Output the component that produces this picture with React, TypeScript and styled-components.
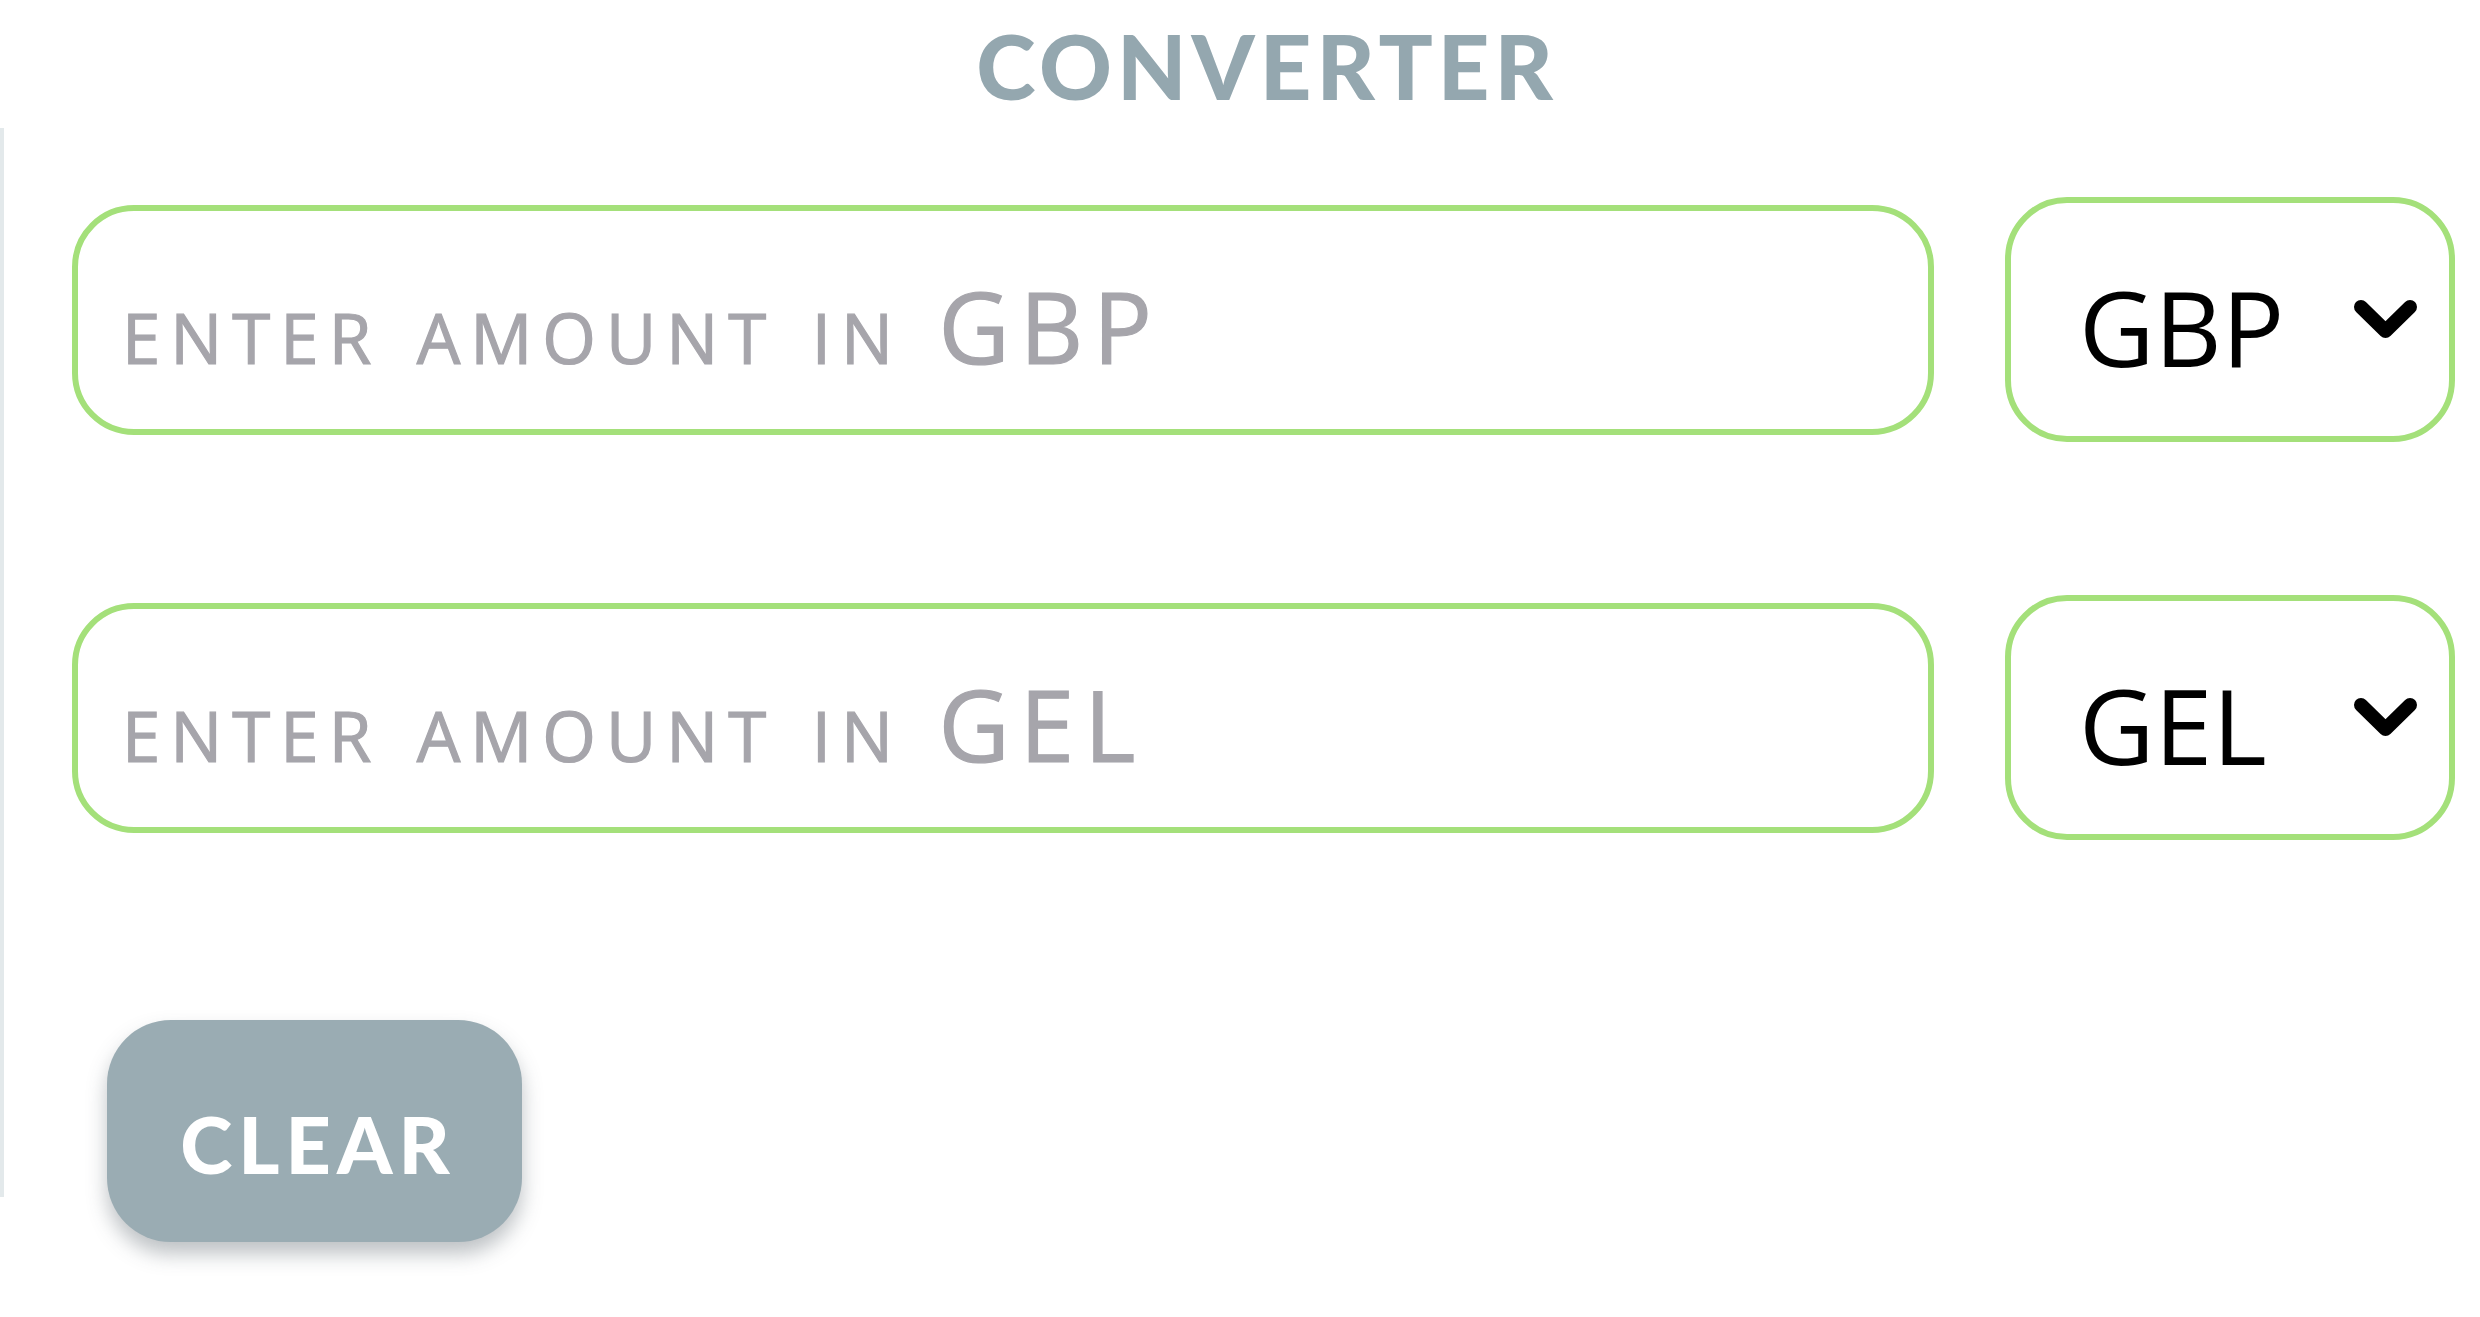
import React, { useState } from "react";
import styled, { createGlobalStyle } from "styled-components";

const GlobalStyle = createGlobalStyle`
  html, body { margin: 0; padding: 0; background: #ffffff; }
  body { font-family: "Open Sans", "Liberation Sans", sans-serif; }
  #root { width: 2480px; }
`;

const Page = styled.main`
  width: 2480px;
  height: 1317px;
  overflow: hidden;
  background: #ffffff;
`;

const Title = styled.h1`
  margin: 0;
  padding: 11px 0 9px 54px;
  text-align: center;
  font-family: Lato, "Liberation Sans", sans-serif;
  font-weight: 900;
  font-size: 90px;
  line-height: 108px;
  letter-spacing: 5px;
  color: #94a7af;
`;

const Panel = styled.section`
  box-sizing: border-box;
  height: 1069px;
  border-left: 4px solid #e3e9eb;
  padding: 69px 25px 0 68px;
  display: flex;
  flex-direction: column;
`;

const Rows = styled.div`
  display: flex;
  flex-direction: column;
  gap: 153px;
  flex-shrink: 0;
`;

const Row = styled.div`
  display: flex;
  align-items: center;
  gap: 71px;
  height: 245px;
`;

const AmountInput = styled.input`
  flex: 1;
  min-width: 0;
  box-sizing: border-box;
  height: 230px;
  border: 6px solid #a4e07a;
  border-radius: 62px;
  padding: 12px 20px 0 44px;
  background: #ffffff;
  font-family: "Open Sans", "Liberation Sans", sans-serif;
  font-size: 98px;
  font-variant: small-caps;
  letter-spacing: 10px;
  color: #333333;
  outline: none;

  &::placeholder {
    color: #a6a5ab;
    font-variant: small-caps;
    -webkit-text-stroke: 1.2px #a6a5ab;
    opacity: 1;
  }
`;

const SelectWrap = styled.div`
  position: relative;
  flex-shrink: 0;
  width: 450px;
  height: 245px;
`;

const CurrencySelect = styled.select`
  appearance: none;
  -webkit-appearance: none;
  box-sizing: border-box;
  width: 100%;
  height: 100%;
  border: 6px solid #a4e07a;
  border-radius: 62px;
  padding: 14px 0 0 68px;
  background: #ffffff;
  font-family: "Open Sans", "Liberation Sans", sans-serif;
  font-size: 104px;
  color: #000000;
  outline: none;
  cursor: pointer;
`;

const Chevron = styled.svg`
  position: absolute;
  right: 37px;
  top: 101px;
  width: 65px;
  height: 44px;
  pointer-events: none;
`;

const ClearButton = styled.button`
  flex-shrink: 0;
  align-self: flex-start;
  margin: 180px 0 0 35px;
  width: 415px;
  height: 222px;
  border: none;
  border-radius: 64px;
  padding: 24px 0 0 7px;
  background: #9aacb3;
  color: #ffffff;
  font-family: Lato, "Liberation Sans", sans-serif;
  font-weight: 900;
  font-size: 79px;
  letter-spacing: 6px;
  box-shadow: 0 12px 20px rgba(70, 80, 90, 0.35);
  cursor: pointer;
`;

const CURRENCIES = ["GBP", "GEL", "USD", "EUR"];

function ChevronIcon() {
  return (
    <Chevron viewBox="0 0 65 44" aria-hidden="true">
      <polyline
        points="8,9 32.5,33 57,9"
        fill="none"
        stroke="#000000"
        strokeWidth="14"
        strokeLinejoin="round"
        strokeLinecap="round"
      />
    </Chevron>
  );
}

type LineProps = {
  amount: string;
  currency: string;
  onAmount: (v: string) => void;
  onCurrency: (v: string) => void;
};

function ConverterLine({ amount, currency, onAmount, onCurrency }: LineProps) {
  return (
    <Row>
      <AmountInput
        type="text"
        value={amount}
        placeholder={`enter amount in ${currency}`}
        onChange={(e) => onAmount(e.target.value)}
      />
      <SelectWrap>
        <CurrencySelect value={currency} onChange={(e) => onCurrency(e.target.value)}>
          {CURRENCIES.map((c) => (
            <option key={c} value={c}>
              {c}
            </option>
          ))}
        </CurrencySelect>
        <ChevronIcon />
      </SelectWrap>
    </Row>
  );
}

export default function App() {
  const [fromAmount, setFromAmount] = useState("");
  const [toAmount, setToAmount] = useState("");
  const [fromCur, setFromCur] = useState("GBP");
  const [toCur, setToCur] = useState("GEL");

  return (
    <Page>
      <GlobalStyle />
      <Title>CONVERTER</Title>
      <Panel>
        <Rows>
          <ConverterLine
            amount={fromAmount}
            currency={fromCur}
            onAmount={setFromAmount}
            onCurrency={setFromCur}
          />
          <ConverterLine
            amount={toAmount}
            currency={toCur}
            onAmount={setToAmount}
            onCurrency={setToCur}
          />
        </Rows>
        <ClearButton
          type="button"
          onClick={() => {
            setFromAmount("");
            setToAmount("");
          }}
        >
          CLEAR
        </ClearButton>
      </Panel>
    </Page>
  );
}
